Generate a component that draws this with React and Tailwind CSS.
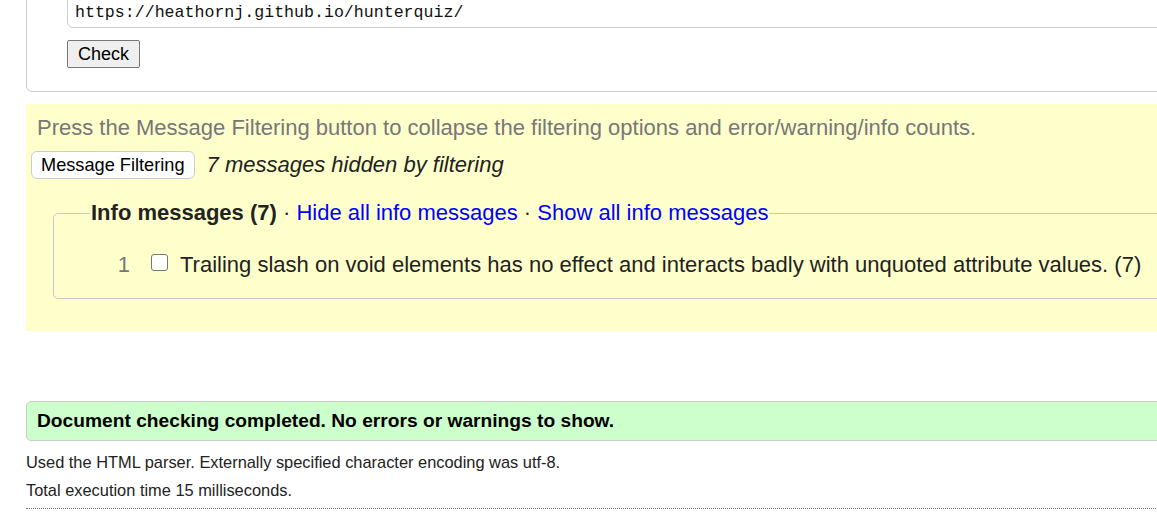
import React from 'react'

function App() {
    const font = { fontFamily: '"Liberation Sans", Arial, sans-serif' }

    return (
        <div className='w-[1157px] h-[527px] overflow-hidden bg-white text-[#222]' style={font}>
            <div className='pl-[26px] w-[1300px]'>

                {/* URL form box */}
                <div className='-mt-[8px] border border-[#ccc] rounded-b-[6px] pl-[40px] pb-[23px]'>
                    <input
                        readOnly
                        value="https://heathornj.github.io/hunterquiz/"
                        className='block w-full h-[35px] border border-[#ccc] rounded-[6px] px-[7px] pt-[4px] text-[16.6px] text-[#111] bg-white outline-none'
                        style={{ fontFamily: '"Liberation Mono", "DejaVu Sans Mono", monospace' }}
                    />
                    <button className='mt-[12px] h-[28px] px-[10px] border border-[#767676] rounded-[2px] bg-[#efefef] text-[18px] leading-none text-black'>
                        Check
                    </button>
                </div>

                {/* filtering */}
                <div className='mt-[12px] bg-[#ffffcc] pt-[12px] pb-[32px]'>
                    <p className='pl-[11px] text-[22px] leading-[24px] text-[#777]'>
                        Press the Message Filtering button to collapse the filtering options and error/warning/info counts.
                    </p>
                    <div className='flex items-center mt-[11px] pl-[5px]'>
                        <button className='h-[28px] px-[9px] border border-[#ccc] rounded-[6px] bg-white text-[18.2px] leading-none text-black'>
                            Message Filtering
                        </button>
                        <span className='ml-[12px] text-[22px] leading-[24px] italic text-[#222]'>7 messages hidden by filtering</span>
                    </div>

                    <fieldset className='mt-[22px] ml-[27px] border border-[#c8c8c8] rounded-[5px] pl-[36px] pb-[21px]'>
                        <legend className='px-[1px] text-[22px] leading-[24px]'>
                            <span className='font-bold text-[#222]'>Info messages (7)</span>
                            <span className='text-[#222]'> · </span>
                            <a className='text-[#0000ff]'>Hide all info messages</a>
                            <span className='text-[#222]'> · </span>
                            <a className='text-[#0000ff]'>Show all info messages</a>
                        </legend>
                        <div className='flex items-center mt-[28px] text-[22px] leading-[24px]'>
                            <span className='w-[40px] text-right text-[#777]'>1</span>
                            <span className='ml-[21px] w-[17px] h-[17px] border border-[#767676] rounded-[3px] bg-white -mt-[5px]'></span>
                            <span className='ml-[12px] text-[#222]'>
                                Trailing slash on void elements has no effect and interacts badly with unquoted attribute values. (7)
                            </span>
                        </div>
                    </fieldset>
                </div>

                {/* result */}
                <div className='mt-[70px] h-[40px] flex items-center bg-[#ccffcc] border border-[#ccc] rounded-l-[5px] pl-[10px]'>
                    <span className='font-bold text-[19.2px] text-black'>
                        Document checking completed. No errors or warnings to show.
                    </span>
                </div>
                <p className='mt-[12px] text-[16.4px] leading-[18px] text-[#222]'>
                    Used the HTML parser. Externally specified character encoding was utf-8.
                </p>
                <p className='mt-[10px] text-[16.4px] leading-[18px] text-[#222]'>
                    Total execution time 15 milliseconds.
                </p>
                <div className='mt-[9px] border-t border-dotted border-[#777]'></div>
            </div>
        </div>
    )
}

export default App
